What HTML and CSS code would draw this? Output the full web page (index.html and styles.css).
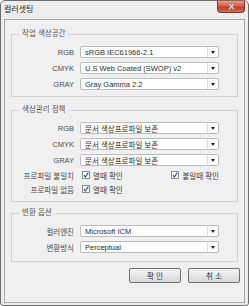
FILE: index.html
```html
<!DOCTYPE html>
<html lang="ko">
<head>
  <meta charset="UTF-8" />
  <title>컬러셋팅</title>
  <link rel="stylesheet" href="styles.css">
</head>
<body>

  <div class="window">
    <!-- Title bar -->
    <div class="titlebar">
      <span class="title">컬러셋팅</span>
      <span class="close">
        <svg width="9" height="7" viewBox="0 0 9 7"><path d="M1 0.5h2l1.5 2 1.5-2h2l-2.5 3 2.5 3h-2l-1.5-2-1.5 2h-2l2.5-3z" fill="#fff" stroke="#8a2a1e" stroke-width="0.4"/></svg>
      </span>
    </div>

    <div class="client">
      <!-- Working spaces -->
      <fieldset class="group g1">
        <legend>작업 색상공간</legend>
        <div class="rows">
          <div class="row"><span class="lbl">RGB</span><div class="combo"><span class="val">sRGB IEC61966-2.1</span><i class="arrow"></i></div></div>
          <div class="row"><span class="lbl">CMYK</span><div class="combo"><span class="val">U.S Web Coated (SWOP) v2</span><i class="arrow"></i></div></div>
          <div class="row"><span class="lbl">GRAY</span><div class="combo"><span class="val">Gray Gamma 2.2</span><i class="arrow"></i></div></div>
        </div>
      </fieldset>

      <!-- Policies -->
      <fieldset class="group g2">
        <legend>색상관리 정책</legend>
        <div class="rows">
          <div class="row"><span class="lbl">RGB</span><div class="combo"><span class="val">문서 색상프로파일 보존</span><i class="arrow"></i></div></div>
          <div class="row"><span class="lbl">CMYK</span><div class="combo"><span class="val">문서 색상프로파일 보존</span><i class="arrow"></i></div></div>
          <div class="row"><span class="lbl">GRAY</span><div class="combo"><span class="val">문서 색상프로파일 보존</span><i class="arrow"></i></div></div>
          <div class="checks">
            <div class="row"><span class="lbl">프로파일 불일치</span>
              <div class="cell">
                <span class="check"><i class="box"><svg width="6" height="6" viewBox="0 0 6 6"><path d="M0.8 3.2l1.5 1.8 3-4.4" fill="none" stroke="#2a4fa8" stroke-width="1.1"/></svg></i>열때 확인</span>
                <span class="check right"><i class="box"><svg width="6" height="6" viewBox="0 0 6 6"><path d="M0.8 3.2l1.5 1.8 3-4.4" fill="none" stroke="#2a4fa8" stroke-width="1.1"/></svg></i>붙일때 확인</span>
              </div>
            </div>
            <div class="row"><span class="lbl">프로파일 없음</span>
              <div class="cell">
                <span class="check"><i class="box"><svg width="6" height="6" viewBox="0 0 6 6"><path d="M0.8 3.2l1.5 1.8 3-4.4" fill="none" stroke="#2a4fa8" stroke-width="1.1"/></svg></i>열때 확인</span>
              </div>
            </div>
          </div>
        </div>
      </fieldset>

      <!-- Conversion -->
      <fieldset class="group g3">
        <legend>변환 옵션</legend>
        <div class="rows">
          <div class="row"><span class="lbl">컬러엔진</span><div class="combo"><span class="val">Microsoft ICM</span><i class="arrow"></i></div></div>
          <div class="row"><span class="lbl">변환방식</span><div class="combo"><span class="val">Perceptual</span><i class="arrow"></i></div></div>
        </div>
      </fieldset>

      <div class="actions">
        <button class="btn">확 인</button>
        <button class="btn">취 소</button>
      </div>
    </div>
  </div>

</body>
</html>
```

FILE: styles.css
```css
/* Base */
* { margin:0; padding:0; box-sizing:border-box; }
body {
  font-family:"Liberation Sans","Noto Sans CJK KR",sans-serif;
  font-size:7.5px;
  color:#4a4a4a;
  background:#fff;
}

/* Window frame */
.window {
  width:249px; height:306px;
  border:1px solid #6e6e6e;
  border-radius:5px 5px 3px 3px;
  background:#ededed;
  display:flex; flex-direction:column;
}
.titlebar {
  height:18px;
  display:flex; align-items:flex-start; justify-content:space-between;
  padding:0 3px 0 3px;
}
.title {
  font-size:8px; color:#2a2a2a;
  line-height:10px; margin-top:4px;
}
.close {
  width:28px; height:12px;
  display:flex; align-items:center; justify-content:center;
  background:linear-gradient(#e9a08f,#d2553c 50%,#c2381f 51%,#d76a4c);
  border:1px solid #8b3526; border-top:none;
  border-radius:0 0 4px 4px;
}

/* Client area */
.client {
  flex:1;
  margin:0 3px 2px 3px;
  border:1px solid #a9a9a9;
  background:#f0f0f0;
  display:flex; flex-direction:column;
}

/* Group boxes */
.group {
  margin:0 6px;
  border:1px solid #d2d2d2;
  padding:7px 0 6px 0;
}
.g1 { margin-top:9px; }
.g2 { margin-top:8px; }
.g3 { margin-top:6px; padding-bottom:8px; }
.group legend {
  margin-left:7px;
  padding:0 3px;
  line-height:10px;
  color:#5a5a5a;
}
.rows { display:flex; flex-direction:column; gap:4px; }
.checks { display:flex; flex-direction:column; gap:2px; margin-top:-1px; }
.row {
  display:grid;
  grid-template-columns:62px 139px;
  column-gap:6px;
  align-items:center;
  height:12px;
}
.lbl { text-align:right; color:#4d4d4d; white-space:nowrap; }

/* Combo boxes */
.combo {
  height:12px;
  display:flex; align-items:center;
  background:#fff;
  border:1px solid #bcbcbc;
  border-radius:2px;
}
.val { flex:1; padding-left:4px; white-space:nowrap; color:#2e2e2e; }
.arrow {
  width:11px; height:100%;
  border-left:1px solid #dedede;
  display:flex; align-items:center; justify-content:center;
}
.arrow::after {
  content:"";
  border-left:2.5px solid transparent;
  border-right:2.5px solid transparent;
  border-top:3px solid #222;
}

/* Checkboxes */
.cell { display:flex; align-items:center; padding-left:2px; }
.check { display:flex; align-items:center; gap:3px; white-space:nowrap; color:#3e3e3e; }
.check.right { margin-left:auto; }
.box {
  width:8px; height:8px;
  background:#fff;
  border:1px solid #8e8f8f;
  display:flex; align-items:center; justify-content:center;
}

/* Buttons */
.actions {
  display:flex; justify-content:flex-end; gap:7px;
  margin:6px 4px 0 0;
}
.btn {
  width:52px; height:15px;
  font:inherit; color:#333;
  background:linear-gradient(#f6f6f6,#e6e6e6 50%,#d8d8d8);
  border:1px solid #707070;
  border-radius:2px;
}
```
